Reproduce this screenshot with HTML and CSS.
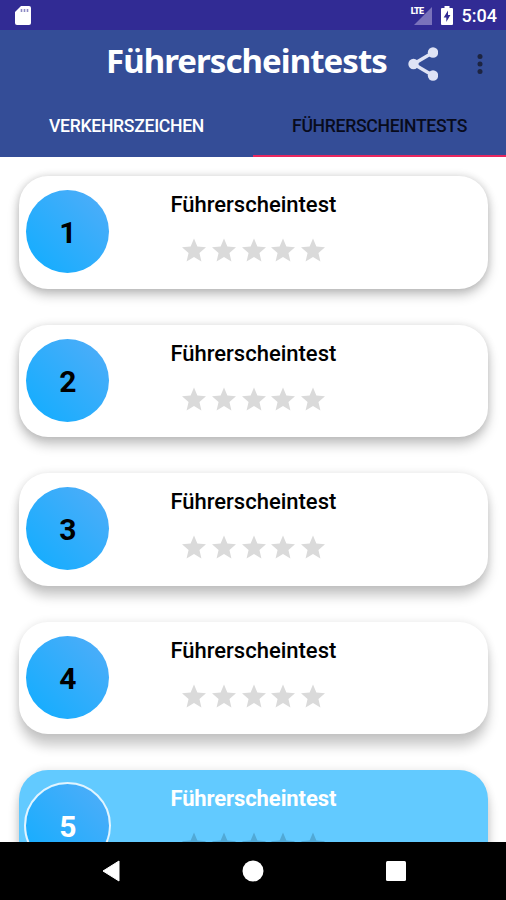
FILE: index.html
```html
<!DOCTYPE html>
<html lang="de">
<head>
    <meta charset="UTF-8">
    <meta name="viewport" content="width=device-width, initial-scale=1.0">
    <title>Führerscheintests</title>
    <link rel="stylesheet" href="styles.css">
</head>
<body>
    <svg width="0" height="0" class="defs">
        <symbol id="star" viewBox="2 1.5 20 20">
            <path d="M12 17.270L18.180 21l-1.640-7.030L22 9.240l-7.190-.610L12 2 9.190 8.630 2 9.240l5.460 4.730L5.820 21z"/>
        </symbol>
    </svg>

    <div class="status-bar">
        <svg class="sd-card" width="16" height="19" viewBox="0 0 16 19">
            <path d="M6 0H14a2 2 0 0 1 2 2V17a2 2 0 0 1-2 2H2a2 2 0 0 1-2-2V6z" fill="#fff"/>
            <path d="M6.500 3v3M9.500 3v3M12.500 3v3" stroke="#8d89c4" stroke-width="1.600"/>
        </svg>
        <div class="signal">
            <span>LTE</span>
            <svg width="18" height="18" viewBox="0 0 18 18"><path d="M18 0V18H0z" fill="#7a72bb"/></svg>
        </div>
        <svg class="battery" width="12" height="19" viewBox="0 0 12 19">
            <path d="M3.500 0h5v2H11a1 1 0 0 1 1 1V18a1 1 0 0 1-1 1H1a1 1 0 0 1-1-1V3a1 1 0 0 1 1-1h2.500z" fill="#fff"/>
            <path d="M7 4.500L2.700 11.500H5.300V16L9.400 9H7z" fill="#312b94"/>
        </svg>
        <span class="clock">5:04</span>
    </div>

    <header class="app-bar">
        <div class="toolbar">
            <h1>Führerscheintests</h1>
            <svg class="share" width="30" height="34" viewBox="0 0 30 34">
                <path d="M25 5.500L5.500 17 25 28.500" fill="none" stroke="#dfe3f5" stroke-width="3.400"/>
                <g fill="#dfe3f5">
                    <circle cx="25" cy="5.500" r="5.200"/>
                    <circle cx="5.500" cy="17" r="5.200"/>
                    <circle cx="25" cy="28.500" r="5.200"/>
                </g>
            </svg>
            <svg class="more" width="6" height="20" viewBox="0 0 6 20" fill="#1d2440">
                <circle cx="3" cy="2.600" r="2.500"/>
                <circle cx="3" cy="10" r="2.500"/>
                <circle cx="3" cy="17.400" r="2.500"/>
            </svg>
        </div>
        <nav class="tabs">
            <a class="tab">VERKEHRSZEICHEN</a>
            <a class="tab active">FÜHRERSCHEINTESTS</a>
        </nav>
    </header>

    <main class="list">
        <div class="card">
            <div class="number">1</div>
            <div class="info">
                <h2>Führerscheintest</h2>
                <div class="stars"><svg><use href="#star"/></svg><svg><use href="#star"/></svg><svg><use href="#star"/></svg><svg><use href="#star"/></svg><svg><use href="#star"/></svg></div>
            </div>
        </div>
        <div class="card depth-2">
            <div class="number">2</div>
            <div class="info">
                <h2>Führerscheintest</h2>
                <div class="stars"><svg><use href="#star"/></svg><svg><use href="#star"/></svg><svg><use href="#star"/></svg><svg><use href="#star"/></svg><svg><use href="#star"/></svg></div>
            </div>
        </div>
        <div class="card depth-3">
            <div class="number">3</div>
            <div class="info">
                <h2>Führerscheintest</h2>
                <div class="stars"><svg><use href="#star"/></svg><svg><use href="#star"/></svg><svg><use href="#star"/></svg><svg><use href="#star"/></svg><svg><use href="#star"/></svg></div>
            </div>
        </div>
        <div class="card depth-4">
            <div class="number">4</div>
            <div class="info">
                <h2>Führerscheintest</h2>
                <div class="stars"><svg><use href="#star"/></svg><svg><use href="#star"/></svg><svg><use href="#star"/></svg><svg><use href="#star"/></svg><svg><use href="#star"/></svg></div>
            </div>
        </div>
        <div class="card selected">
            <div class="number">5</div>
            <div class="info">
                <h2>Führerscheintest</h2>
                <div class="stars"><svg><use href="#star"/></svg><svg><use href="#star"/></svg><svg><use href="#star"/></svg><svg><use href="#star"/></svg><svg><use href="#star"/></svg></div>
            </div>
        </div>
    </main>

    <footer class="nav-bar">
        <svg width="18" height="22" viewBox="0 0 18 22"><path d="M17 1v20L1 11z" fill="#fff" stroke="#fff" stroke-linejoin="round"/></svg>
        <svg width="22" height="22" viewBox="0 0 22 22"><circle cx="11" cy="11" r="10.500" fill="#fff"/></svg>
        <svg width="20" height="20" viewBox="0 0 20 20"><rect width="20" height="20" rx="1.500" fill="#fff"/></svg>
    </footer>
</body>
</html>
```

FILE: styles.css
```css
:root {
    --status-color: #312b94;
    --primary-color: #344d97;
    --accent-color: #e8275f;
    --selected-color: #62caff;
    --star-color: #dadada;
}
* {
    box-sizing: border-box;
}
body {
    margin: 0;
    height: 900px;
    display: flex;
    flex-direction: column;
    overflow: hidden;
    background: #fff;
    font-family: Roboto, "Liberation Sans", sans-serif;
}
svg {
    display: block;
    flex: none;
}
.defs {
    position: absolute;
}
.status-bar {
    height: 30px;
    flex: none;
    display: flex;
    align-items: flex-start;
    padding: 6px 9px 0 15px;
    background: var(--status-color);
    color: #fff;
}
.signal {
    display: flex;
    margin-left: auto;
    margin-right: 9px;
    padding-top: 1px;
}
.signal span {
    font-size: 9px;
    font-weight: 900;
    line-height: 9px;
    letter-spacing: -0.6px;
    margin-right: -10px;
    z-index: 1;
}
.clock {
    margin-left: 9px;
    font-size: 18px;
    font-weight: 500;
    line-height: 20px;
}
.app-bar {
    height: 127px;
    flex: none;
    display: flex;
    flex-direction: column;
    background: var(--primary-color);
}
.toolbar {
    height: 67px;
    display: flex;
    align-items: center;
    padding: 1px 23px 0 106px;
}
h1 {
    width: 302px;
    margin: -7px 0 0;
    color: #fff;
    font-family: "Noto Sans", "Open Sans", sans-serif;
    font-size: 33px;
    font-weight: 700;
    line-height: 40px;
    letter-spacing: -0.95px;
    white-space: nowrap;
}
.more {
    margin-left: auto;
}
.tabs {
    flex: 1;
    display: grid;
    grid-template-columns: 1fr 1fr;
}
.tab {
    padding-top: 19px;
    border-bottom: 2px solid transparent;
    color: #fff;
    font-size: 17.6px;
    font-weight: 500;
    line-height: 20px;
    letter-spacing: -0.3px;
    text-align: center;
}
.tab.active {
    color: #080b1c;
    border-bottom-color: var(--accent-color);
}
.list {
    flex: 1;
    min-height: 0;
    display: flex;
    flex-direction: column;
    gap: 36px;
    padding: 19px 18px 0 19px;
    overflow: hidden;
}
.card {
    height: 112.6px;
    flex: none;
    display: flex;
    align-items: flex-start;
    padding: 14px 7px;
    border-radius: 29px;
    background: #fff;
    box-shadow: 0 6px 12px rgba(0, 0, 0, 0.23), 0 0 8px rgba(0, 0, 0, 0.14);
}
.depth-2 {
    box-shadow: 0 8px 12px rgba(0, 0, 0, 0.22), 0 0 8px rgba(0, 0, 0, 0.13);
}
.depth-3 {
    box-shadow: 0 10px 12px rgba(0, 0, 0, 0.21), 0 0 8px rgba(0, 0, 0, 0.11);
}
.depth-4 {
    box-shadow: 0 12px 12px rgba(0, 0, 0, 0.2), 0 0 8px rgba(0, 0, 0, 0.1);
}
.number {
    width: 83px;
    height: 83px;
    margin-left: 0.4px;
    border-radius: 50%;
    background: linear-gradient(45deg, #0fadff, #52adf8);
    color: #000;
    font-size: 30px;
    font-weight: 700;
    line-height: 86px;
    text-align: center;
}
.info {
    margin-left: 61px;
}
h2 {
    margin: 2px 0 0;
    color: #000;
    font-size: 22px;
    font-weight: 500;
    line-height: 26px;
    white-space: nowrap;
}
.stars {
    display: flex;
    gap: 5.6px;
    margin: 20px 0 0 12px;
    fill: var(--star-color);
}
.stars svg {
    width: 24px;
    height: 24px;
}
.selected {
    background: var(--selected-color);
    color: #fff;
    box-shadow: 0 12px 12px rgba(0, 0, 0, 0.2), 0 0 8px rgba(0, 0, 0, 0.1);
}
.selected .number {
    outline: 2px solid #e2f4ff;
    color: #fff;
}
.selected h2 {
    color: #fff;
    font-weight: 700;
    letter-spacing: -0.1px;
}
.selected .stars {
    fill: #51a9d6;
}
.nav-bar {
    height: 58px;
    flex: none;
    display: flex;
    align-items: center;
    justify-content: space-between;
    padding: 0 100px 0 102px;
    background: #000;
    z-index: 1;
}
```
